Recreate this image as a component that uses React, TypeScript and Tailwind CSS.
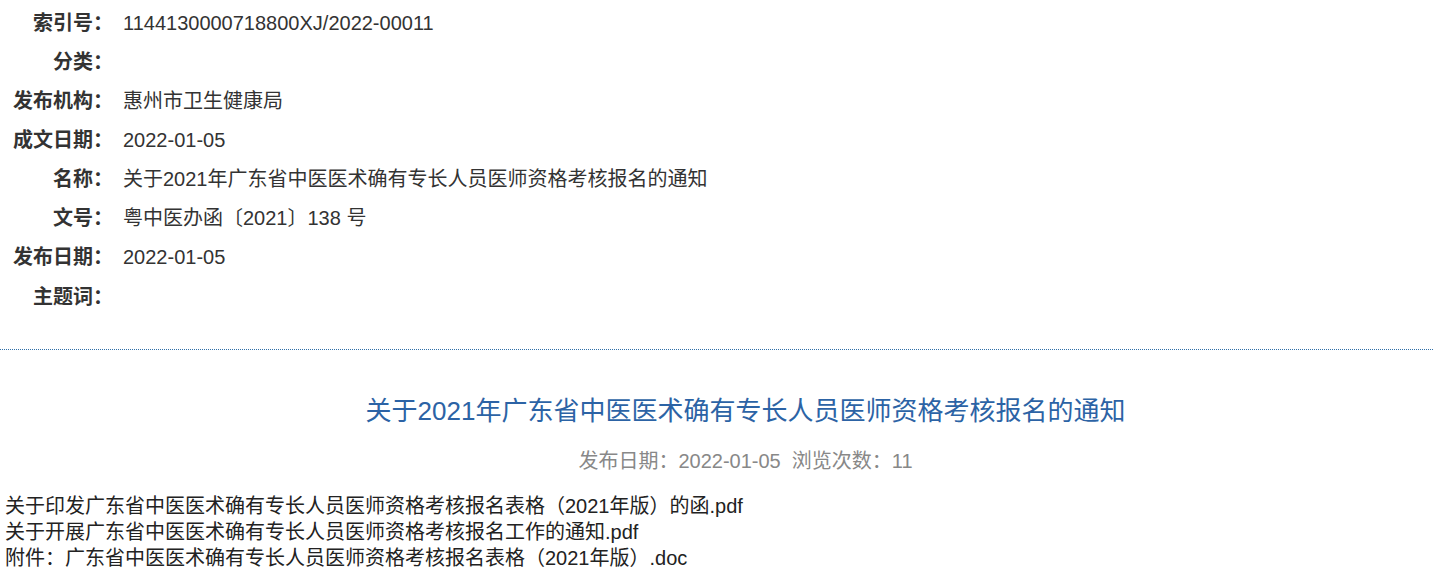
const font = "font-['Liberation_Sans','Noto_Sans_CJK_SC',sans-serif]";

const rows: { label: string; value: string }[] = [
  { label: "索引号：", value: "1144130000718800XJ/2022-00011" },
  { label: "分类：", value: "" },
  { label: "发布机构：", value: "惠州市卫生健康局" },
  { label: "成文日期：", value: "2022-01-05" },
  { label: "名称：", value: "关于2021年广东省中医医术确有专长人员医师资格考核报名的通知" },
  { label: "文号：", value: "粤中医办函〔2021〕138 号" },
  { label: "发布日期：", value: "2022-01-05" },
  { label: "主题词：", value: "" },
];

const files = [
  "关于印发广东省中医医术确有专长人员医师资格考核报名表格（2021年版）的函.pdf",
  "关于开展广东省中医医术确有专长人员医师资格考核报名工作的通知.pdf",
  "附件：广东省中医医术确有专长人员医师资格考核报名表格（2021年版）.doc",
];

const App = () => {
  return (
    <div className={`${font} w-[1433px] min-h-[578px] bg-white text-[#333]`}>
      {/* 信息表 */}
      <div className="pt-[3px] flex flex-col">
        {rows.map((row) => (
          <div key={row.label} className="h-[39.15px] flex items-center text-[20px] whitespace-nowrap">
            <span className="w-[113px] shrink-0 text-right font-bold">{row.label}</span>
            <span className="pl-[10px]">{row.value}</span>
          </div>
        ))}
      </div>

      <div className="mt-[33px] border-t border-dotted border-[#2f6fa8]"></div>

      <div className="pl-[58px] text-center">
        <h1 className="mt-[41px] text-[26px] leading-[40px] text-[#2c63a5]">
          关于2021年广东省中医医术确有专长人员医师资格考核报名的通知
        </h1>
        <p className="mt-[15px] text-[20px] leading-[30px] text-[#888]">
          发布日期：2022-01-05&nbsp;&nbsp;浏览次数：11
        </p>
      </div>

      <div className="mt-[17px] px-[5px] text-[20px] leading-[26px] text-[#222]">
        {files.map((f) => (
          <p key={f}>{f}</p>
        ))}
      </div>
    </div>
  );
};

export default App;
